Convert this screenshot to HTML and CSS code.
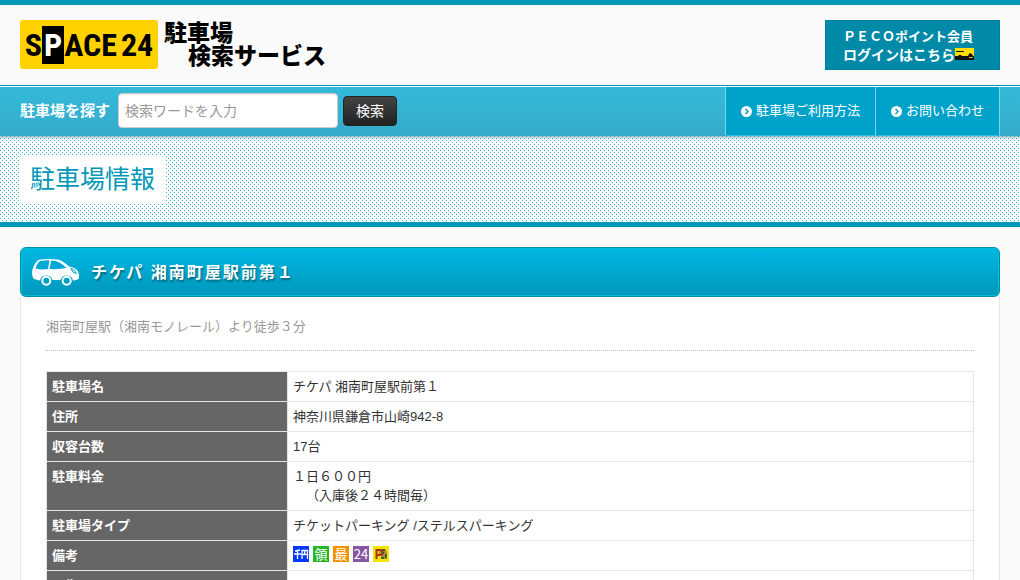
FILE: index.html
```html
<!DOCTYPE html>
<html lang="ja">
<head>
<meta charset="utf-8">
<title>チケパ 湘南町屋駅前第１ | 駐車場検索サービス</title>
<link rel="stylesheet" href="styles.css">
</head>
<body>
<header class="header">
  <a class="logo" href="#">
    <span class="brand"><span>S</span><span class="brand-p">P</span><span>ACE</span><span class="brand-num">24</span></span>
    <span class="service"><span>駐車場</span><span class="service-second">検索サービス</span></span>
  </a>
  <a class="member" href="#">
    <span>ＰＥＣＯポイント会員</span>
    <span class="member-line">ログインはこちら<svg class="card" viewBox="0 0 19 12" aria-hidden="true"><path fill="#fd0" d="M0 0h19v8H0z"/><path fill="#111" d="M0 8h19v4H0zM1 3h8v1H1zM3 8l1-1h2l1 1zM13 8l1-2 1-1 2 1 1 2z"/><path fill="#cb0" d="M14 9h4v1h-4z"/></svg></span>
  </a>
</header>
<nav class="nav">
  <form class="search">
    <label class="search-label" for="q">駐車場を探す</label>
    <input class="search-input" id="q" type="text" placeholder="検索ワードを入力">
    <button class="search-button" type="button">検索</button>
  </form>
  <div class="links">
    <a class="link" href="#"><svg class="arrow" viewBox="0 0 22 22" aria-hidden="true"><circle cx="11" cy="11" r="11" fill="#fff"/><path d="M9 6l5 5-5 5" fill="none" stroke="#00a2ca" stroke-width="3"/></svg>駐車場ご利用方法</a>
    <a class="link" href="#"><svg class="arrow" viewBox="0 0 22 22" aria-hidden="true"><circle cx="11" cy="11" r="11" fill="#fff"/><path d="M9 6l5 5-5 5" fill="none" stroke="#00a2ca" stroke-width="3"/></svg>お問い合わせ</a>
  </div>
</nav>
<div class="banner"><h1 class="banner-title">駐車場情報</h1></div>
<main class="main">
  <h2 class="heading">
    <svg class="car" viewBox="0 0 48 27" aria-hidden="true">
      <path fill="#fff" d="M8 0.500Q17-.500 26 .500Q31 2 37 7.500Q42 8 45 11Q47.500 14 47 19Q46 21 41 21.500A6.500 6.500 0 0 0 28.500 21H20.500A6.500 6.500 0 0 0 8 21.500L2 20Q0 18.500 0 12Q3 1.500 8 .500z"/>
      <path fill="#00a9d4" d="M8.500 2Q13 1.200 17.500 1.400L16 10Q9 11 3.500 9.500Q5.500 3 8.500 2zM19.200 1.400Q27 1 34.500 9Q28 10.500 17.500 10z"/>
      <path fill="none" stroke="#00a5ce" d="M39 9.500Q43 10 44.500 14.500Q40 14 39 9.500z"/>
      <g fill="#009fc5" stroke="#fff" stroke-width="2"><circle cx="14.300" cy="21.700" r="4"/><circle cx="34.700" cy="21.700" r="4"/></g>
    </svg>
    <span>チケパ 湘南町屋駅前第１</span>
  </h2>
  <section class="panel">
    <p class="access">湘南町屋駅（湘南モノレール）より徒歩３分</p>
    <table class="info">
      <tr><th scope="row">駐車場名</th><td>チケパ 湘南町屋駅前第１</td></tr>
      <tr><th scope="row">住所</th><td>神奈川県鎌倉市山崎942-8</td></tr>
      <tr><th scope="row">収容台数</th><td>17台</td></tr>
      <tr><th scope="row">駐車料金</th><td>１日６００円<br>　（入庫後２４時間毎）</td></tr>
      <tr><th scope="row">駐車場タイプ</th><td>チケットパーキング /ステルスパーキング</td></tr>
      <tr><th scope="row">備考</th><td>
        <div class="badges">
          <svg class="badge" viewBox="0 0 16 16" role="img" aria-label="千円札"><path fill="#0038ff" d="M0 0h16v16H0z"/><path fill="none" stroke="#fff" stroke-width="1.300" d="M2 5l5-1M4.500 4.500V13M1 8h7M9 13V4.500h5.500V13M11.700 4.500V8M9 8.500h5.500"/></svg>
          <span class="badge badge-green">領</span>
          <span class="badge badge-orange">最</span>
          <span class="badge badge-purple">24</span>
          <svg class="badge" viewBox="0 0 16 16" role="img" aria-label="PECOポイント"><path fill="#f2e600" d="M0 0h16v16H0z"/><path fill="#b58a35" d="M6 3h6l2 3v7H8V9H6z"/><path fill="none" stroke="#a8321f" stroke-width="2" d="M3.500 13V4H7a2 2 0 0 1 0 5H4"/><path fill="#4a5a26" d="M9 3h3v2H9zM9 6h2v2H9zM12 8h2v4h-2zM8 11h3v2H8z"/></svg>
        </div>
      </td></tr>
      <tr><th scope="row">画像</th><td></td></tr>
    </table>
  </section>
</main>
</body>
</html>
```
FILE: styles.css
```css
* { box-sizing: border-box; }
body {
  margin: 0;
  border-top: 5px solid #0097b9;
  background: #fafafa;
  color: #333;
  font: 13px/19px "Liberation Sans", "Noto Sans CJK JP", sans-serif;
  text-spacing-trim: space-all;
}
a { color: inherit; text-decoration: none; }
svg { display: block; flex: none; }
.header {
  display: flex;
  justify-content: space-between;
  align-items: flex-start;
  padding: 15px 20px;
  border-bottom: 1px solid #0097b9;
}
.logo { display: flex; gap: 6px; }
.brand {
  display: flex;
  align-items: center;
  justify-content: center;
  width: 138px;
  height: 49px;
  border-radius: 3px;
  background: #ffd200;
  color: #000;
  font: bold 32px/38px "Roboto Condensed", "Liberation Sans Narrow", "Open Sans Condensed", "Noto Sans CJK JP", sans-serif;
}
.brand-p { padding: 0 2px; background: #000; color: #fff; }
.brand-num { margin-left: 4px; }
.service {
  display: flex;
  flex-direction: column;
  color: #000;
  font: 900 23px/23px "Noto Sans CJK JP", sans-serif;
}
.service-second { padding-left: 24px; }
.member {
  display: flex;
  flex-direction: column;
  width: 175px;
  height: 50px;
  padding: 6px 17px;
  border: 1px solid #007f9b;
  background: #008aa8;
  color: #fff;
  font: bold 13px/18px "Noto Sans CJK JP", sans-serif;
}
.member-line { display: flex; align-items: center; font-size: 14px; }
.card { width: 19px; height: 12px; }
.nav {
  display: flex;
  justify-content: space-between;
  padding: 0 20px;
  border-top: 1px solid #fff;
  background: linear-gradient(#35bada, #35abca);
}
.search { display: flex; align-items: center; padding-bottom: 2px; }
.search-label { width: 98px; color: #fff; font-size: 15px; font-weight: bold; }
.search-input {
  width: 220px;
  height: 35px;
  margin-right: 5px;
  padding: 0 6px;
  border: 1px solid #ccc;
  border-radius: 4px;
  background: #fff;
  box-shadow: inset 0 1px 1px rgba(0, 0, 0, .08);
  font: 14px/20px "Liberation Sans", "Noto Sans CJK JP", sans-serif;
}
.search-input::placeholder { color: #999; }
.search-button {
  width: 54px;
  height: 30px;
  padding: 0;
  border: 1px solid #222;
  border-radius: 4px;
  background: linear-gradient(#444, #222);
  color: #fff;
  font: 14px/20px "Liberation Sans", "Noto Sans CJK JP", sans-serif;
}
.links { display: flex; border-right: 1px solid #72d8ee; border-bottom: 1px solid #35bada; }
.link {
  display: flex;
  align-items: center;
  gap: 4px;
  height: 48px;
  padding: 0 15px 2px;
  border-left: 1px solid #72d8ee;
  background: #00a2ca;
  color: #fff;
}
.arrow { width: 11px; height: 11px; margin-top: 2px; }
.banner {
  padding: 19px 20px 18px;
  border-bottom: 5px solid #0097b9;
  background:
    linear-gradient(rgba(0, 90, 110, .35), transparent) 0 0 / 100% 4px no-repeat,
    conic-gradient(at 1px 1px, transparent 75%, #35b3cf 0) 0 2px / 4px 4px,
    conic-gradient(at 1px 1px, transparent 75%, #35b3cf 0) 2px 0 / 4px 4px,
    #fff;
}
.banner-title {
  width: fit-content;
  margin: 0;
  padding: 8px 11px 9px 10px;
  background: #fff;
  color: #0097b9;
  font-size: 25px;
  font-weight: normal;
  line-height: 32px;
}
.main { padding: 20px; }
.heading {
  display: flex;
  align-items: center;
  gap: 11px;
  height: 50px;
  margin: 0;
  padding: 1px 11px 0;
  border: 1px solid #008fae;
  border-radius: 6px;
  background: linear-gradient(#00b8e4, #0097b9);
  box-shadow: inset 0 0 0 1px #00c0d8;
  color: #fff;
  font-size: 16px;
  letter-spacing: 2px;
  text-shadow: 1px 2px 2px rgba(0, 0, 0, .4);
}
.car { width: 48px; height: 27px; }
.panel {
  padding: 20px 25px;
  border: 1px solid #e5e5e5;
  border-top: 0;
  background: #fff;
}
.access {
  margin: 0 0 20px;
  padding-bottom: 14px;
  border-bottom: 1px dotted #bbb;
  color: #999;
}
.info { width: 100%; border-collapse: collapse; }
.info th, .info td {
  height: 30px;
  padding: 5px;
  border: 1px solid #e5e5e5;
  text-align: left;
  vertical-align: top;
}
.info th { width: 241px; background: #666; color: #fff; }
.badges { display: flex; gap: 4px; }
.badge {
  width: 16px;
  height: 16px;
  color: #fff;
  font: 13px/16px "Noto Sans CJK JP", sans-serif;
  text-align: center;
}
.badge-green { background: #25b525; }
.badge-orange { background: #f39100; }
.badge-purple { background: #8957a1; }
```
